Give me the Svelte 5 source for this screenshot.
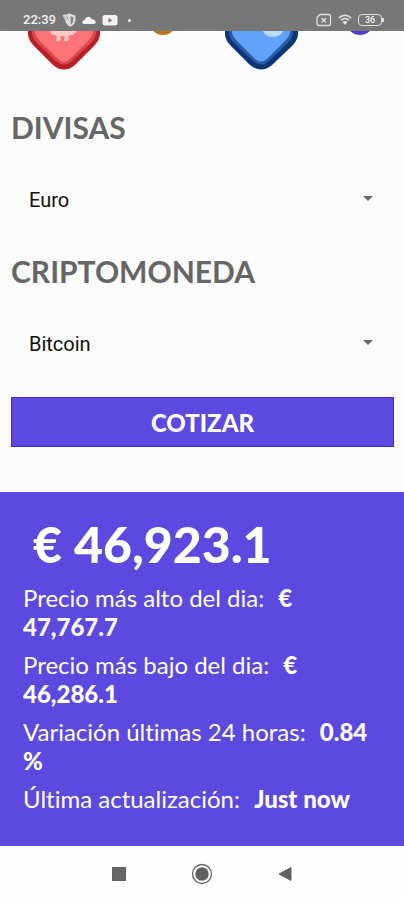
<script lang="ts">
	const currencies = ['Euro', 'Dolar de Estados Unidos', 'Peso Mexicano', 'Libra Esterlina'];
	const coins = ['Bitcoin', 'Ethereum', 'Ripple', 'Litecoin'];

	let currency = $state('Euro');
	let coin = $state('Bitcoin');

	const price = '€ 46,923.1';
	const details = [
		{ label: 'Precio más alto del dia:', value: '€ 47,767.7' },
		{ label: 'Precio más bajo del dia:', value: '€ 46,286.1' },
		{ label: 'Variación últimas 24 horas:', value: '0.84 %' },
		{ label: 'Última actualización:', value: 'Just now' }
	];
</script>

<div class="screen">
	<header class="status-bar">
		<div class="status-group">
			<span class="clock">22:39</span>
			<svg width="14" height="14" viewBox="0 0 14 14" aria-hidden="true">
				<path d="M0.500 2 L4 1.500 L7.500 0.500 L13.500 2.500 V7 C13.500 10 11.500 12.500 8.500 13.700 C5.500 12.500 4 10.500 3.300 8 Z" fill="#dcdcdc" />
				<path d="M8.500 3 L11.300 4.200 V7 C11.300 9.200 10.200 10.800 8.500 11.800 Z" fill="#8a8a8a" />
				<path d="M2 3.500 L5 7.500 M4.500 3 L6.500 6" stroke="#999" fill="none" />
			</svg>
			<svg width="14" height="14" viewBox="0 0 14 14" aria-hidden="true">
				<path d="M2.500 11 C-0.500 11 -0.300 7.500 2.500 7.200 C3.500 3 8.500 2.300 9.800 6.200 C14 6 15 11 11.800 11 Z" fill="#f2f2f2" />
			</svg>
			<svg width="16" height="14" viewBox="0 0 16 14" aria-hidden="true">
				<rect x="0.500" y="2" width="15" height="10.500" rx="2.500" fill="#f2f2f2" />
				<path d="M6.500 4.900 L10.500 7.200 L6.500 9.500 Z" fill="#777" />
			</svg>
			<span class="dot"></span>
		</div>
		<div class="status-group">
			<svg width="16" height="14" viewBox="0 0 16 14" fill="none" stroke="#dedede" aria-hidden="true">
				<path d="M4 1.500 H12.500 Q14.500 1.500 14.500 3.500 V10.500 Q14.500 12.500 12.500 12.500 H3 Q1 12.500 1 10.500 V4.500 Z" stroke-width="1.300" />
				<path d="M5.500 5 L10 9.500 M10 5 L5.500 9.500" stroke-width="1.500" />
			</svg>
			<svg width="14" height="14" viewBox="0 0 14 14" fill="none" stroke="#e6e6e6" aria-hidden="true">
				<path d="M0.800 5 Q7 -0.500 13.200 5" stroke-width="1.500" />
				<path d="M3 7.300 Q7 3.800 11 7.300" stroke-width="1.500" />
				<path d="M4.500 9 Q7 6.800 9.500 9 L7 12 Z" fill="#e6e6e6" stroke="none" />
			</svg>
			<span class="battery">36</span>
		</div>
	</header>

	<svg class="hero" viewBox="0 -1 404 41" aria-hidden="true">
		<path d="M28 -2 V3 Q29 9 34 14 L53 33 Q64 42 75 33 L94 14 Q99 9 100 3 V-2 Z" fill="#b91f27" />
		<path d="M32 -2 V2 Q33 7 37 11 L56 29 Q64 36 72 29 L91 11 Q95 7 96 2 V-2 Z" fill="#d9494e" />
		<path d="M35 -2 V1 Q36 5 40 9 L58 27 Q64 33 70 27 L88 9 Q92 5 93 1 V-2 Z" fill="#ff7478" />
		<path d="M50 -1 H77 L73 3 H69 L68 9 H64 L65 4 H61 L60 9 H56 L57 4 L51 2 Z" fill="#ffc9ca" />
		<circle cx="163" cy="-11" r="14" fill="#bd7715" />

		<path d="M225 -2 V3 Q226 9 231 14 L250 33 Q261 42 272 33 L292 14 Q297 9 298 3 V-2 Z" fill="#0d3679" />
		<path d="M229 -2 V2 Q230 7 234 11 L253 29 Q261 36 269 29 L288 11 Q292 7 293 2 V-2 Z" fill="#295ca4" />
		<path d="M232 -2 V1 Q233 5 237 9 L255 27 Q261 32 267 27 L285 9 Q289 5 290 1 V-2 Z" fill="#60a2fa" />
		<ellipse cx="273" cy="-2" rx="10" ry="7" fill="#bcd9ff" />
		<circle cx="360" cy="-11" r="14" fill="#5138c8" />
	</svg>

	<form class="form" onsubmit={(e) => e.preventDefault()}>
		<label for="currency">DIVISAS</label>
		<div class="select-wrapper">
			<select id="currency" bind:value={currency}>
				{#each currencies as option}
					<option value={option}>{option}</option>
				{/each}
			</select>
		</div>

		<label for="coin">CRIPTOMONEDA</label>
		<div class="select-wrapper">
			<select id="coin" bind:value={coin}>
				{#each coins as option}
					<option value={option}>{option}</option>
				{/each}
			</select>
		</div>

		<button type="submit" class="submit">COTIZAR</button>
	</form>

	<section class="quote">
		<p class="price">{price}</p>
		{#each details as detail}
			<p class="detail">{detail.label} <strong>{detail.value}</strong></p>
		{/each}
	</section>

	<nav class="nav-bar">
		<button type="button" aria-label="Recientes">
			<svg width="24" height="24" viewBox="0 0 24 24">
				<rect x="5.500" y="5.500" width="13" height="13" fill="#666" stroke="#606060" />
			</svg>
		</button>
		<button type="button" aria-label="Inicio">
			<svg width="24" height="24" viewBox="0 0 24 24">
				<circle cx="12" cy="12" r="9.500" fill="none" stroke="#666" stroke-width="1.300" />
				<circle cx="12" cy="12" r="6.700" fill="#606060" />
			</svg>
		</button>
		<button type="button" aria-label="Atrás">
			<svg width="24" height="24" viewBox="0 0 24 24">
				<path d="M6 12 L18 5.500 V18.500 Z" fill="#606060" stroke="#606060" stroke-linejoin="round" />
			</svg>
		</button>
	</nav>
</div>

<style>
	:global(body) {
		margin: 0;
		background: #fbfbfb;
	}

	.screen {
		display: flex;
		flex-direction: column;
		min-height: 100vh;
		background: #fbfbfb;
		font-family: Lato, 'Liberation Sans', sans-serif;
		font-variant-ligatures: none;
	}

	.status-bar {
		display: flex;
		justify-content: space-between;
		box-sizing: border-box;
		height: 31px;
		padding: 10px 20px 0 23px;
		background: #777;
		color: #f2f2f2;
	}

	.status-group {
		display: flex;
		align-items: center;
		gap: 6px;
		height: 20px;
	}

	.clock {
		font: 500 13px/20px Roboto, sans-serif;
	}

	.dot {
		width: 3px;
		height: 3px;
		margin-left: 4px;
		border-radius: 50%;
		background: #f2f2f2;
	}

	.battery {
		position: relative;
		box-sizing: border-box;
		width: 24px;
		height: 12px;
		margin-right: 2px;
		border: 1px solid #dedede;
		border-radius: 4px;
		font: 500 9px/10px Roboto, sans-serif;
		text-align: center;
	}

	.battery::after {
		content: '';
		position: absolute;
		top: 3px;
		right: -3px;
		width: 2px;
		height: 4px;
		background: #dedede;
	}

	.hero {
		display: block;
		width: 100%;
	}

	.form {
		display: flex;
		flex-direction: column;
		gap: 30px;
		padding: 37px 10px 45px 11px;
	}

	label {
		color: #666;
		font-size: 30px;
		font-weight: 700;
		line-height: 36px;
	}

	.select-wrapper {
		position: relative;
	}

	.select-wrapper::after {
		content: '';
		position: absolute;
		top: 21px;
		right: 21px;
		border: 5px solid transparent;
		border-top-color: #666;
		border-bottom: 0;
		pointer-events: none;
	}

	select {
		appearance: none;
		width: 100%;
		height: 48px;
		padding: 2px 40px 0 18px;
		border: 0;
		background: transparent;
		color: #111;
		font: 400 20px Roboto, sans-serif;
	}

	.submit {
		height: 50px;
		padding: 0;
		border: 1px solid #4429c9;
		background: #5c49e0;
		color: #fff;
		font: 900 24px 'Lato Black', Lato, sans-serif;
		cursor: pointer;
	}

	.quote {
		flex: 1;
		padding: 22px 23px 33px;
		background: #5c49e0;
		color: #fff;
	}

	.quote p {
		margin: 0;
	}

	.quote .price {
		padding: 0 10px 9px;
		font-family: 'Lato Black', Lato, sans-serif;
		font-size: 50px;
		font-weight: 900;
		line-height: 60px;
	}

	.detail {
		font-size: 24px;
		line-height: 29px;
	}

	.quote .detail + .detail {
		margin-top: 9px;
	}

	.detail strong {
		margin-left: 8px;
		font-family: 'Lato Black', Lato, sans-serif;
		font-weight: 900;
	}

	.nav-bar {
		display: flex;
		justify-content: center;
		align-items: center;
		gap: 59px;
		box-sizing: border-box;
		height: 54px;
		padding-top: 2px;
		background: #fefefe;
	}

	.nav-bar button {
		display: flex;
		padding: 0;
		border: 0;
		background: none;
	}
</style>
